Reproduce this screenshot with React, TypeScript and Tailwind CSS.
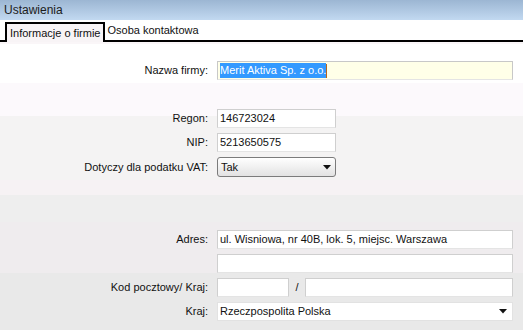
import React from "react";

const font = { fontFamily: '"Liberation Sans", Arial, sans-serif' };

function Label({ children }: { children?: React.ReactNode }) {
  return (
    <div className="w-[209px] shrink-0 text-right pr-[1px] text-[11px] text-[#111] leading-none">
      {children}
    </div>
  );
}

function Field({ value, w = "w-[296px]" }: { value?: string; w?: string }) {
  return (
    <div
      className={`${w} h-[19px] bg-white border border-[#cfcfcf] border-b-[#e4e4e4] flex items-center px-[2px] text-[11px] text-[#111] leading-none`}
    >
      {value}
    </div>
  );
}

function Arrow() {
  return (
    <svg width="8" height="5" viewBox="0 0 8 5" className="shrink-0">
      <path d="M0 0 H8 L4 4.5 Z" fill="#111" />
    </svg>
  );
}

function Row({
  label,
  children,
  className = "",
}: {
  label?: string;
  children: React.ReactNode;
  className?: string;
}) {
  return (
    <div className={`flex items-center gap-[8px] ${className}`}>
      <Label>{label}</Label>
      {children}
    </div>
  );
}

export default function App() {
  return (
    <div className="w-[523px] h-[330px] overflow-hidden bg-white" style={font}>
      {/* title */}
      <div className="h-[20px] bg-gradient-to-b from-[#9cb6d3] to-[#c2d9f1] flex items-center pl-[4px] text-[12px] text-[#1c1c1c]">
        Ustawienia
      </div>

      {/* tabs */}
      <div className="h-[22px] flex items-end border-b-2 border-black bg-white pl-[5px]">
        <div className="h-[20px] -mb-[2px] px-[3px] border-2 border-b-0 border-black bg-[#f8f4f6] flex items-center text-[11px] text-[#111]">
          Informacje o firmie
        </div>
        <div className="h-[20px] px-[2px] flex items-center text-[11px] text-[#111]">
          Osoba kontaktowa
        </div>
      </div>

      {/* form */}
      <div className="h-[288px] flex flex-col bg-[linear-gradient(to_bottom,#faf6f8_0px,#faf6f8_2px,#ffffff_2px,#ffffff_41px,#fcf9fc_41px,#fcf9fc_74px,#f4f3f3_74px,#f4f3f3_138px,#f6f2f4_138px,#f6f2f4_153px,#eeeeee_153px,#eeeeee_180px,#efecee_180px,#efecee_231px,#e9e9e9_231px)]">
        <Row label="Nazwa firmy:" className="mt-[19px]">
          <div className="w-[296px] h-[19px] bg-[#ffffe8] border border-[#c8c8c8] border-b-[#e4e4e4] flex items-center px-[2px] text-[11px] leading-none">
            <span className="bg-[#3399ff] text-white py-[2px]">Merit Aktiva Sp. z o.o.</span>
            <span className="w-[1px] h-[14px] bg-[#b5651d]" />
          </div>
        </Row>

        <Row label="Regon:" className="mt-[29px]">
          <Field value="146723024" w="w-[119px]" />
        </Row>
        <Row label="NIP:" className="mt-[5px]">
          <Field value="5213650575" w="w-[119px]" />
        </Row>
        <Row label="Dotyczy dla podatku VAT:" className="mt-[5px]">
          <div className="w-[119px] h-[20px] rounded-[3px] border border-[#7b7b7b] bg-gradient-to-b from-white to-[#e2e2e2] flex items-center justify-between pl-[3px] pr-[4px] text-[11px] text-[#111] leading-none">
            <span>Tak</span>
            <Arrow />
          </div>
        </Row>

        <Row label="Adres:" className="mt-[53px]">
          <Field value="ul. Wisniowa, nr 40B, lok. 5, miejsc. Warszawa" />
        </Row>
        <Row className="mt-[5px]">
          <Field />
        </Row>
        <Row label="Kod pocztowy/ Kraj:" className="mt-[5px]">
          <div className="flex items-center">
            <Field w="w-[72px]" />
            <span className="w-[16px] text-center text-[11px] text-[#111]">/</span>
            <Field w="w-[208px]" />
          </div>
        </Row>
        <Row label="Kraj:" className="mt-[5px]">
          <div className="w-[296px] h-[19px] bg-white border border-[#e2e2e2] flex items-center justify-between pl-[2px] pr-[5px] text-[11px] text-[#111] leading-none">
            <span>Rzeczpospolita Polska</span>
            <Arrow />
          </div>
        </Row>
      </div>
    </div>
  );
}
